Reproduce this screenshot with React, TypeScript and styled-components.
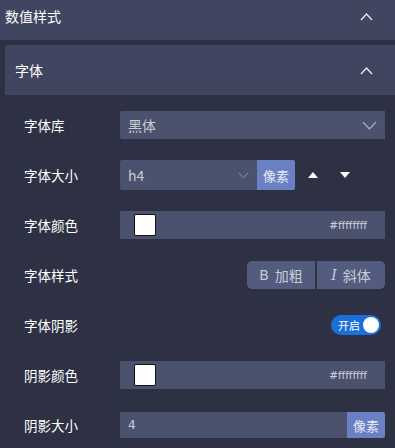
import React, { FC } from 'react'
import styled, { createGlobalStyle } from 'styled-components'

const GlobalStyle = createGlobalStyle`
  body {
    margin: 0;
    background: #2e3144;
    font-family: "Noto Sans CJK SC", "Noto Sans", sans-serif;
    color: #ffffff;
  }
`

const Panel = styled.div`
  width: 395px;
  height: 448px;
  overflow: hidden;
  background: #2e3144;
`

const TopHeader = styled.div`
  height: 32px;
  background: #40465f;
  display: flex;
  align-items: center;
  justify-content: space-between;
  padding: 0 22px 8px 5px;
  font-size: 14px;
  margin-bottom: 5px;
`

const Section = styled.div`
  margin-left: 5px;
`

const SectionHeader = styled.div`
  height: 50px;
  background: #40465f;
  display: flex;
  align-items: center;
  justify-content: space-between;
  padding: 0 22px 0 10px;
  font-size: 14px;
  margin-bottom: 5px;
`

const Rows = styled.div`
  display: flex;
  flex-direction: column;
`

const Row = styled.div`
  height: 50px;
  display: flex;
  align-items: center;
  padding: 0 10px 0 19px;
`

const Label = styled.div`
  width: 96px;
  font-size: 13.5px;
  color: #ffffff;
`

const Field = styled.div<{ $h?: number }>`
  flex: 1;
  height: ${p => p.$h ?? 28}px;
  background: #4b526d;
  display: flex;
  align-items: center;
  font-size: 14px;
  color: #c9ccd6;
`

const SelectField = styled(Field)<{ $w?: number }>`
  flex: ${p => (p.$w ? 'none' : '1')};
  width: ${p => (p.$w ? `${p.$w}px` : 'auto')};
  padding: 0 8px;
  justify-content: space-between;
  box-sizing: border-box;
  border-radius: 2px 0 0 2px;
`

const UnitButton = styled.div<{ $h?: number }>`
  width: 38px;
  height: ${p => p.$h ?? 30}px;
  background: #6a80c3;
  color: #e8ecf8;
  font-size: 13px;
  display: flex;
  align-items: center;
  justify-content: center;
  border-radius: 0 2px 2px 0;
`

const Arrows = styled.div`
  display: flex;
  gap: 22px;
  margin-left: 13px;
  align-items: center;
`

const ColorField = styled(Field)`
  padding: 0 18px 0 14px;
  justify-content: space-between;
`

const Swatch = styled.div`
  width: 20px;
  height: 20px;
  background: #ffffff;
  border: 1px solid #111;
  border-radius: 2px;
`

const Hex = styled.span`
  font-family: "DejaVu Sans", sans-serif;
  font-size: 10.5px;
  color: #d0d3dc;
`

const Spacer = styled.div`
  flex: 1;
`

const StyleGroup = styled.div`
  display: flex;
  gap: 2px;
`

const StyleButton = styled.div`
  width: 68px;
  height: 28px;
  background: #535b7e;
  color: #c9ccd8;
  font-size: 14px;
  display: flex;
  align-items: center;
  justify-content: center;
  gap: 6px;
  &:first-child {
    border-radius: 5px 0 0 5px;
  }
  &:last-child {
    border-radius: 0 5px 5px 0;
  }
`

const Glyph = styled.span<{ $italic?: boolean }>`
  font-family: ${p => (p.$italic ? '"DejaVu Serif", serif' : '"DejaVu Sans", sans-serif')};
  font-size: 14px;
  font-style: ${p => (p.$italic ? 'italic' : 'normal')};
`

const Toggle = styled.div`
  width: 50px;
  height: 20px;
  border-radius: 10px;
  background: #1a6fd9;
  display: flex;
  align-items: center;
  justify-content: space-between;
  padding: 0 2px 0 7px;
  box-sizing: border-box;
  font-size: 11px;
  color: #ffffff;
  margin-right: 4px;
`

const Knob = styled.div`
  width: 16px;
  height: 16px;
  border-radius: 50%;
  background: #ffffff;
`

const ValueText = styled.span`
  padding-left: 8px;
  font-family: "DejaVu Sans", sans-serif;
  font-size: 12px;
  color: #c9ccd6;
`

const ChevronUp: FC = () => (
  <svg width="13" height="9" viewBox="0 0 13 9" fill="none">
    <path d="M1 8 L6.5 2 L12 8" stroke="#e6e8ee" strokeWidth="1.4" />
  </svg>
)

const ChevronDown: FC<{ size?: number; color?: string }> = ({ size = 14, color = '#b0b4c2' }) => (
  <svg width={size} height={size * 0.6} viewBox="0 0 14 8.4" fill="none">
    <path d="M1 1 L7 7.4 L13 1" stroke={color} strokeWidth="1.2" />
  </svg>
)

const Triangle: FC<{ down?: boolean }> = ({ down }) => (
  <svg width="10" height="6" viewBox="0 0 10 6">
    <path d={down ? 'M0 0 H10 L5 6 Z' : 'M0 6 H10 L5 0 Z'} fill="#ffffff" />
  </svg>
)

const App: FC = () => {
  return (
    <Panel>
      <GlobalStyle />
      <TopHeader>
        <span>数值样式</span>
        <ChevronUp />
      </TopHeader>
      <Section>
        <SectionHeader>
          <span>字体</span>
          <ChevronUp />
        </SectionHeader>
        <Rows>
          <Row>
            <Label>字体库</Label>
            <SelectField>
              <span>黑体</span>
              <ChevronDown size={15} />
            </SelectField>
          </Row>
          <Row>
            <Label>字体大小</Label>
            <SelectField $w={137} $h={30}>
              <span>h4</span>
              <ChevronDown size={11} color="#8e93a6" />
            </SelectField>
            <UnitButton>像素</UnitButton>
            <Arrows>
              <Triangle />
              <Triangle down />
            </Arrows>
          </Row>
          <Row>
            <Label>字体颜色</Label>
            <ColorField>
              <Swatch />
              <Hex>#ffffffff</Hex>
            </ColorField>
          </Row>
          <Row>
            <Label>字体样式</Label>
            <Spacer />
            <StyleGroup>
              <StyleButton>
                <Glyph>B</Glyph>
                <span>加粗</span>
              </StyleButton>
              <StyleButton>
                <Glyph $italic>I</Glyph>
                <span>斜体</span>
              </StyleButton>
            </StyleGroup>
          </Row>
          <Row>
            <Label>字体阴影</Label>
            <Spacer />
            <Toggle>
              <span>开启</span>
              <Knob />
            </Toggle>
          </Row>
          <Row>
            <Label>阴影颜色</Label>
            <ColorField>
              <Swatch />
              <Hex>#ffffffff</Hex>
            </ColorField>
          </Row>
          <Row>
            <Label>阴影大小</Label>
            <Field $h={26}>
              <ValueText>4</ValueText>
            </Field>
            <UnitButton $h={26}>像素</UnitButton>
          </Row>
        </Rows>
      </Section>
    </Panel>
  )
}

export default App
